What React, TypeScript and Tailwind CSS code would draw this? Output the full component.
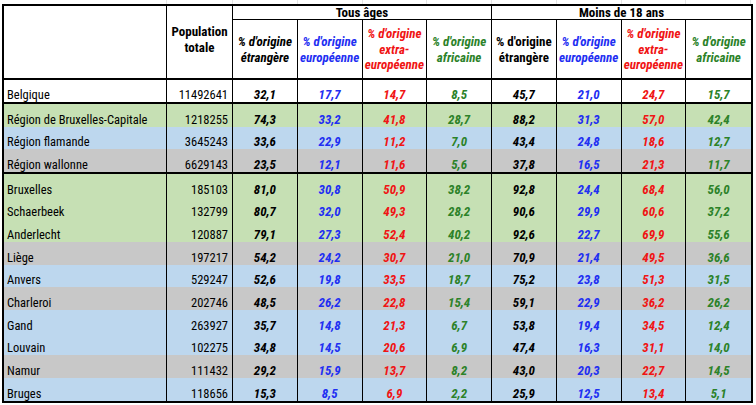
type Tone = "white" | "green" | "blue" | "gray";

const ROW_BG: Record<Tone, string> = {
  white: "bg-white",
  green: "bg-[#c6e0b4]",
  blue: "bg-[#bdd7ee]",
  gray: "bg-[#c8c8c8]",
};

// colour of each value column, same order in both age groups
const VALUE_COLORS = ["text-black", "text-[#1f2ff2]", "text-[#f01414]", "text-[#2c8229]"];

const GRID = "grid grid-cols-[163px_66px_repeat(8,64.75px)]";

interface Row {
  name: string;
  pop: string;
  values: string[];
  tone: Tone;
  height: string;
  thick?: boolean;
}

const R = "h-[22.7px]";

const rows: Row[] = [
  { name: "Belgique", pop: "11492641", values: ["32,1", "17,7", "14,7", "8,5", "45,7", "21,0", "24,7", "15,7"], tone: "white", height: "h-[24px]", thick: true },
  { name: "Région de Bruxelles-Capitale", pop: "1218255", values: ["74,3", "33,2", "41,8", "28,7", "88,2", "31,3", "57,0", "42,4"], tone: "green", height: "h-[22.67px]" },
  { name: "Région flamande", pop: "3645243", values: ["33,6", "22,9", "11,2", "7,0", "43,4", "24,8", "18,6", "12,7"], tone: "blue", height: "h-[22.67px]" },
  { name: "Région wallonne", pop: "6629143", values: ["23,5", "12,1", "11,6", "5,6", "37,8", "16,5", "21,3", "11,7"], tone: "gray", height: "h-[24.66px]", thick: true },
  { name: "Bruxelles", pop: "185103", values: ["81,0", "30,8", "50,9", "38,2", "92,8", "24,4", "68,4", "56,0"], tone: "green", height: R },
  { name: "Schaerbeek", pop: "132799", values: ["80,7", "32,0", "49,3", "28,2", "90,6", "29,9", "60,6", "37,2"], tone: "green", height: R },
  { name: "Anderlecht", pop: "120887", values: ["79,1", "27,3", "52,4", "40,2", "92,6", "22,7", "69,9", "55,6"], tone: "green", height: R },
  { name: "Liège", pop: "197217", values: ["54,2", "24,2", "30,7", "21,0", "70,9", "21,4", "49,5", "36,6"], tone: "gray", height: R },
  { name: "Anvers", pop: "529247", values: ["52,6", "19,8", "33,5", "18,7", "75,2", "23,8", "51,3", "31,5"], tone: "blue", height: R },
  { name: "Charleroi", pop: "202746", values: ["48,5", "26,2", "22,8", "15,4", "59,1", "22,9", "36,2", "26,2"], tone: "gray", height: R },
  { name: "Gand", pop: "263927", values: ["35,7", "14,8", "21,3", "6,7", "53,8", "19,4", "34,5", "12,4"], tone: "blue", height: R },
  { name: "Louvain", pop: "102275", values: ["34,8", "14,5", "20,6", "6,9", "47,4", "16,3", "31,1", "14,0"], tone: "blue", height: R },
  { name: "Namur", pop: "111432", values: ["29,2", "15,9", "13,7", "8,2", "43,0", "20,3", "22,7", "14,5"], tone: "gray", height: R },
  { name: "Bruges", pop: "118656", values: ["15,3", "8,5", "6,9", "2,2", "25,9", "12,5", "13,4", "5,1"], tone: "blue", height: R },
];

const SUB_HEADERS = [
  ["% d'origine", "étrangère"],
  ["% d'origine", "européenne"],
  ["% d'origine", "extra-", "européenne"],
  ["% d'origine", "africaine"],
];

function SubHeader({ lines, color, italic, last }: { lines: string[]; color: string; italic: boolean; last?: boolean }) {
  return (
    <div
      className={`flex flex-col items-center justify-center whitespace-nowrap border-b-2 border-black pt-[1px] text-center text-[13px] font-bold leading-[15.5px] ${color} ${italic ? "italic" : ""} ${last ? "" : "border-r"}`}
    >
      {lines.map((l) => (
        <span key={l}>{l}</span>
      ))}
    </div>
  );
}

function DataRow({ row }: { row: Row }) {
  return (
    <div className={`${GRID} ${row.height} ${ROW_BG[row.tone]} ${row.thick ? "border-b-2 border-black" : ""}`}>
      <div className="flex items-end border-r border-black pl-[3px] leading-[15px]">{row.name}</div>
      <div className="flex items-end justify-end border-r border-black pr-[4px] leading-[15px]">{row.pop}</div>
      {row.values.map((v, i) => (
        <div
          key={i}
          className={`flex items-end justify-center text-[13px] font-bold italic leading-[15px] ${VALUE_COLORS[i % 4]} ${i < 7 ? "border-r border-black" : ""}`}
        >
          {v}
        </div>
      ))}
    </div>
  );
}

export default function App() {
  return (
    <div className="h-[405px] w-[756px] overflow-hidden bg-white font-['Roboto_Condensed','Roboto',sans-serif] text-[12.5px] text-black">
      {/* faint spreadsheet gridlines above the table */}
      <div className={`${GRID} ml-[4px] h-[4px]`}>
        {Array.from({ length: 10 }).map((_, i) => (
          <div key={i} className="border-r border-[#e4e4e4]" />
        ))}
      </div>
      <div className="ml-[2px] w-[751px] border-2 border-black">
        <div className={`${GRID} grid-rows-[14px_60px]`}>
          <div className="row-span-2 border-r border-b-2 border-black" />
          <div className="row-span-2 flex flex-col items-center justify-center border-r border-b-2 border-black pb-[4px] text-center text-[13px] font-bold leading-[16px]">
            <span>Population</span>
            <span>totale</span>
          </div>
          <div className="col-span-4 flex items-center justify-center border-r border-b border-black text-[13px] font-bold leading-none">
            Tous âges
          </div>
          <div className="col-span-4 flex items-center justify-center border-b border-black text-[13px] font-bold leading-none">
            Moins de 18 ans
          </div>
          {SUB_HEADERS.map((lines, i) => (
            <SubHeader key={`a${i}`} lines={lines} color={VALUE_COLORS[i]} italic />
          ))}
          {SUB_HEADERS.map((lines, i) => (
            <SubHeader key={`b${i}`} lines={lines} color={VALUE_COLORS[i]} italic={i !== 0} last={i === 3} />
          ))}
        </div>
        {rows.map((r) => (
          <DataRow key={r.name} row={r} />
        ))}
      </div>
    </div>
  );
}
